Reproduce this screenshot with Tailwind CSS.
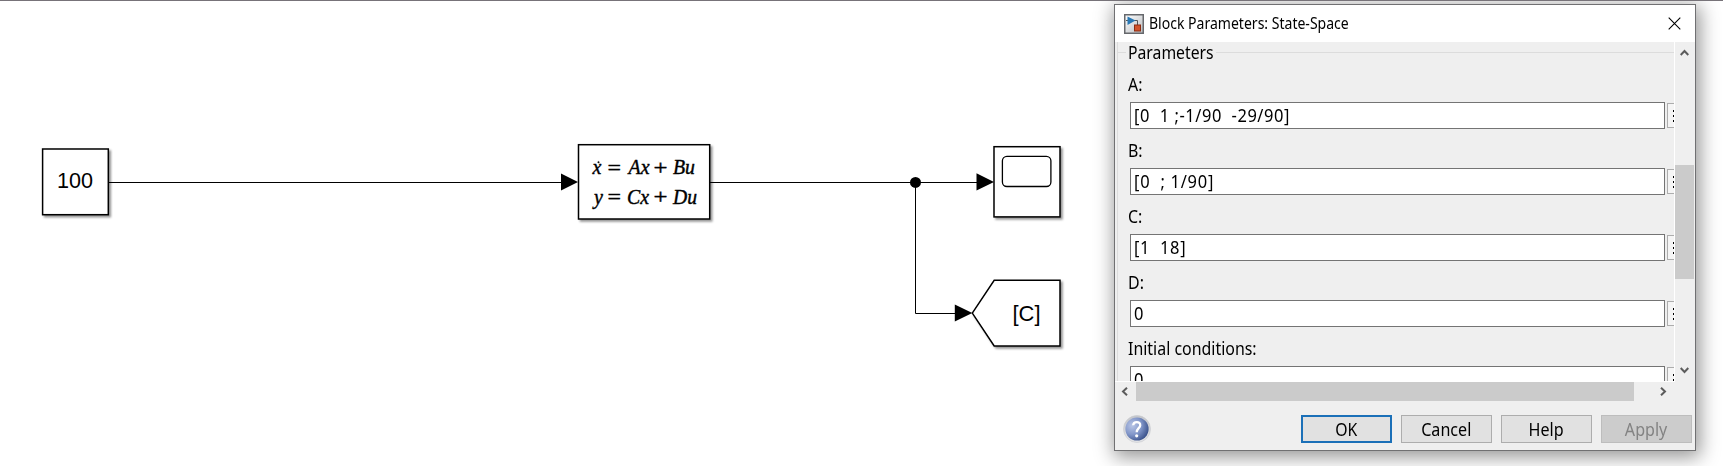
<!DOCTYPE html>
<html lang="en">
<head>
<meta charset="utf-8">
<title>Block Parameters: State-Space</title>
<script src="https://cdn.jsdelivr.net/npm/@tailwindcss/browser@4"></script>
</head>
<body class="bg-white text-black overflow-hidden">
<main class="flex w-[1723px] h-[466px] border-t border-[#777379] overflow-hidden">
  <!-- Model canvas -->
  <svg class="w-[1114px] h-[465px] shrink-0" viewBox="0 1 1114 465">
    <defs>
      <filter id="sh" x="-10%" y="-10%" width="125%" height="125%"><feDropShadow dx="2" dy="2" stdDeviation="1.3" flood-color="#000" flood-opacity=".42"/></filter>
    </defs>
    <g stroke="#000" stroke-width="1" fill="none">
      <path d="M109 182.500H562M710 182.500H977M915.500 182V313.500H955"/>
    </g>
    <g fill="#fff" stroke="#000" stroke-width="1.500">
      <rect x="42.600" y="149" width="65.700" height="65.700" filter="url(#sh)"/>
      <rect x="578.500" y="144.700" width="131.200" height="74.300" filter="url(#sh)"/>
      <rect x="994" y="146.700" width="66" height="70.200" filter="url(#sh)"/>
      <path d="M972.300 313.100L994.200 280.300H1060V345.900H994.200Z" filter="url(#sh)"/>
      <rect x="1002.400" y="156.300" width="48.500" height="30.200" rx="4.500" stroke-width="1.300"/>
    </g>
    <path d="M561 173.500L578 182L561 190.500ZM976.500 173.300L994 182L976.500 190.500ZM954.800 304.500L972.300 313L954.800 321.500Z"/>
    <circle cx="915.500" cy="182.400" r="5.500"/>
    <g font-family="Liberation Sans, sans-serif" font-size="22.500">
      <text x="57" y="188" textLength="36" lengthAdjust="spacingAndGlyphs">100</text>
      <text x="1012.500" y="321" textLength="28" lengthAdjust="spacingAndGlyphs">[C]</text>
    </g>
    <g font-family="Liberation Serif, serif" font-size="20" stroke="#000" stroke-width=".4">
      <text x="592.500" y="174.300" font-style="italic">x</text><circle cx="598.500" cy="162.200" r=".8"/>
      <text x="607.500" y="174.500" textLength="13.500" lengthAdjust="spacingAndGlyphs">=</text>
      <text x="628.500" y="174.300" font-style="italic" textLength="21" lengthAdjust="spacingAndGlyphs">Ax</text>
      <text x="653.500" y="174.500" textLength="14" lengthAdjust="spacingAndGlyphs">+</text>
      <text x="673" y="174.300" font-style="italic" textLength="22" lengthAdjust="spacingAndGlyphs">Bu</text>
      <text x="594" y="203.500" font-style="italic">y</text>
      <text x="607.500" y="204" textLength="13.500" lengthAdjust="spacingAndGlyphs">=</text>
      <text x="627" y="203.500" font-style="italic" textLength="22" lengthAdjust="spacingAndGlyphs">Cx</text>
      <text x="653.500" y="204" textLength="14" lengthAdjust="spacingAndGlyphs">+</text>
      <text x="673" y="203.500" font-style="italic" textLength="24" lengthAdjust="spacingAndGlyphs">Du</text>
    </g>
  </svg>

  <!-- Dialog -->
  <section class="mt-[3px] w-[582px] h-[447px] shrink-0 flex flex-col border border-[#707072] bg-[#efefef] shadow-[2px_4px_18px_2px_rgba(0,0,0,0.42)] font-['Noto_Sans',sans-serif] text-[17.500px]">
    <header class="flex items-center h-[37px] shrink-0 bg-white pl-[9px] pr-[14px]">
      <svg class="size-[20px]" viewBox="0 0 20 20">
        <defs><linearGradient id="ic" x2="1" y2="1"><stop stop-color="#fff"/><stop offset="1" stop-color="#b9bcc0"/></linearGradient></defs>
        <rect x=".75" y=".75" width="18.500" height="18.500" fill="url(#ic)" stroke="#66686c" stroke-width="1.500"/>
        <path d="M2 6.500H13.500V11" fill="none" stroke="#555" stroke-width="1"/>
        <path d="M3.500 2.500L11.500 6.500L3.500 11Z" fill="#2878b5"/>
        <rect x="10.500" y="11" width="6" height="6" fill="#d2532b" stroke="#8c2d12"/>
      </svg>
      <h1 class="ml-[5px] -mt-[2px] w-[300px] shrink-0 whitespace-nowrap text-[15.500px] leading-5 origin-left scale-x-[0.905]">Block Parameters: State-Space</h1>
      <svg class="ml-auto size-[13px]" viewBox="0 0 13 13"><path d="M.7 .7L12.300 12.300M12.300 .7L.7 12.300" stroke="#000" stroke-width="1.100"/></svg>
    </header>

    <div class="flex h-[340px] shrink-0">
      <div class="w-[560px] h-[340px] overflow-hidden border-r border-b border-white pl-[2px]">
        <fieldset class="h-[380px] -mt-[4px] border-l border-t-0 border-[#dcdcdc] pl-[12px]">
          <div class="flex items-center h-[28px] -ml-[12px]">
            <span class="w-[8px] h-px bg-[#dcdcdc]"></span>
            <span class="w-[90px] pl-[2px] leading-[24px]"><span class="inline-block origin-left scale-x-[0.900]">Parameters</span></span>
            <span class="flex-1 h-px bg-[#dcdcdc]"></span>
          </div>
          <div class="flex flex-col pt-[7px]">
            <div class="h-[66px]"><label class="block h-[29px] leading-[23px] -ml-[2px]"><span class="inline-block origin-left scale-x-[0.910]">A:</span></label>
              <div class="flex gap-[2px] items-center"><div class="w-[535px] h-[27px] shrink-0 bg-white border border-[#747474] pl-[3px] leading-[25px]"><span class="inline-block whitespace-pre tracking-[0.600px] origin-left scale-x-[0.940]">[0  1 ;-1/90  -29/90]</span></div><div class="w-[25px] h-[25px] shrink-0 border border-[#adadad] bg-[#f5f5f5] flex flex-col gap-[3px] justify-center pl-[5px]"><i class="size-[2px] bg-black"></i><i class="size-[2px] bg-black"></i><i class="size-[2px] bg-black"></i></div></div></div>
            <div class="h-[66px]"><label class="block h-[29px] leading-[23px] -ml-[2px]"><span class="inline-block origin-left scale-x-[0.910]">B:</span></label>
              <div class="flex gap-[2px] items-center"><div class="w-[535px] h-[27px] shrink-0 bg-white border border-[#747474] pl-[3px] leading-[25px]"><span class="inline-block whitespace-pre tracking-[0.800px] origin-left scale-x-[0.940]">[0  ; 1/90]</span></div><div class="w-[25px] h-[25px] shrink-0 border border-[#adadad] bg-[#f5f5f5] flex flex-col gap-[3px] justify-center pl-[5px]"><i class="size-[2px] bg-black"></i><i class="size-[2px] bg-black"></i><i class="size-[2px] bg-black"></i></div></div></div>
            <div class="h-[66px]"><label class="block h-[29px] leading-[23px] -ml-[2px]"><span class="inline-block origin-left scale-x-[0.910]">C:</span></label>
              <div class="flex gap-[2px] items-center"><div class="w-[535px] h-[27px] shrink-0 bg-white border border-[#747474] pl-[3px] leading-[25px]"><span class="inline-block whitespace-pre tracking-[0.700px] origin-left scale-x-[0.940]">[1  18]</span></div><div class="w-[25px] h-[25px] shrink-0 border border-[#adadad] bg-[#f5f5f5] flex flex-col gap-[3px] justify-center pl-[5px]"><i class="size-[2px] bg-black"></i><i class="size-[2px] bg-black"></i><i class="size-[2px] bg-black"></i></div></div></div>
            <div class="h-[66px]"><label class="block h-[29px] leading-[23px] -ml-[2px]"><span class="inline-block origin-left scale-x-[0.910]">D:</span></label>
              <div class="flex gap-[2px] items-center"><div class="w-[535px] h-[27px] shrink-0 bg-white border border-[#747474] pl-[3px] leading-[25px]"><span class="inline-block whitespace-pre origin-left scale-x-[0.940]">0</span></div><div class="w-[25px] h-[25px] shrink-0 border border-[#adadad] bg-[#f5f5f5] flex flex-col gap-[3px] justify-center pl-[5px]"><i class="size-[2px] bg-black"></i><i class="size-[2px] bg-black"></i><i class="size-[2px] bg-black"></i></div></div></div>
            <div class="h-[66px]"><label class="block h-[29px] leading-[23px] -ml-[2px]"><span class="inline-block origin-left scale-x-[0.910]">Initial conditions:</span></label>
              <div class="flex gap-[2px] items-center"><div class="w-[535px] h-[27px] shrink-0 bg-white border border-[#747474] pl-[3px] leading-[25px]"><span class="inline-block whitespace-pre origin-left scale-x-[0.940]">0</span></div><div class="w-[25px] h-[25px] shrink-0 border border-[#adadad] bg-[#f5f5f5] flex flex-col gap-[3px] justify-center pl-[5px]"><i class="size-[2px] bg-black"></i><i class="size-[2px] bg-black"></i><i class="size-[2px] bg-black"></i></div></div></div>
          </div>
        </fieldset>
      </div>
      <div class="w-[19px] flex flex-col items-center">
        <svg class="mt-[7px] w-[9px] h-[7px]" viewBox="0 0 9 7"><path d="M.7 6L4.500 2L8.300 6" fill="none" stroke="#5c5c5c" stroke-width="2"/></svg>
        <div class="mt-[109px] w-[19px] h-[114px] bg-[#cbcbcb]"></div>
        <svg class="mt-[88px] w-[9px] h-[7px]" viewBox="0 0 9 7"><path d="M.7 1L4.500 5L8.300 1" fill="none" stroke="#5c5c5c" stroke-width="2"/></svg>
      </div>
    </div>

    <div class="flex items-center h-[19px] shrink-0 pl-[6px]">
      <svg class="w-[7px] h-[9px]" viewBox="0 0 7 9"><path d="M6 .7L2 4.500L6 8.300" fill="none" stroke="#5c5c5c" stroke-width="2"/></svg>
      <div class="ml-[8px] w-[498px] h-[19px] bg-[#cbcbcb]"></div>
      <svg class="ml-[26px] w-[7px] h-[9px]" viewBox="0 0 7 9"><path d="M1 .7L5 4.500L1 8.300" fill="none" stroke="#5c5c5c" stroke-width="2"/></svg>
    </div>

    <footer class="flex h-[28px] mt-[14px] shrink-0 pl-[8px] gap-[9px]">
      <svg class="w-[28px] h-[28px] mr-[141px] shrink-0" viewBox="0 0 28 28">
        <defs>
          <radialGradient id="hp" cx=".3" cy=".35" r=".8"><stop stop-color="#b9c6e6"/><stop offset=".5" stop-color="#8095c8"/><stop offset="1" stop-color="#2e4680"/></radialGradient>
          <linearGradient id="rim" x2="0" y2="1"><stop stop-color="#c3c5ca"/><stop offset="1" stop-color="#e4e5e8"/></linearGradient>
        </defs>
        <circle cx="14" cy="14" r="13.500" fill="url(#rim)" stroke="#c8cacf" stroke-width=".6"/>
        <circle cx="14" cy="14" r="11.600" fill="url(#hp)"/>
        <path d="M10.200 10.300C10.400 5.900 17.600 6.100 17.200 10.400C17 13 13.700 13.600 13.700 17.200" fill="none" stroke="#fff" stroke-width="2.300"/>
        <circle cx="13.700" cy="20.800" r="1.600" fill="#fff"/>
      </svg>
      <div class="w-[91px] shrink-0 border-2 border-[#1b70b8] bg-[#e1e1e1] flex items-center justify-center"><span class="scale-x-[0.900]">OK</span></div>
      <div class="w-[91px] shrink-0 border border-[#adadad] bg-[#e1e1e1] flex items-center justify-center"><span class="scale-x-[0.920]">Cancel</span></div>
      <div class="w-[91px] shrink-0 border border-[#adadad] bg-[#e1e1e1] flex items-center justify-center"><span class="scale-x-[0.920]">Help</span></div>
      <div class="w-[91px] shrink-0 border border-[#bdbdbd] bg-[#cccccc] text-[#838383] flex items-center justify-center"><span class="scale-x-[0.920]">Apply</span></div>
    </footer>
  </section>
</main>
</body>
</html>
